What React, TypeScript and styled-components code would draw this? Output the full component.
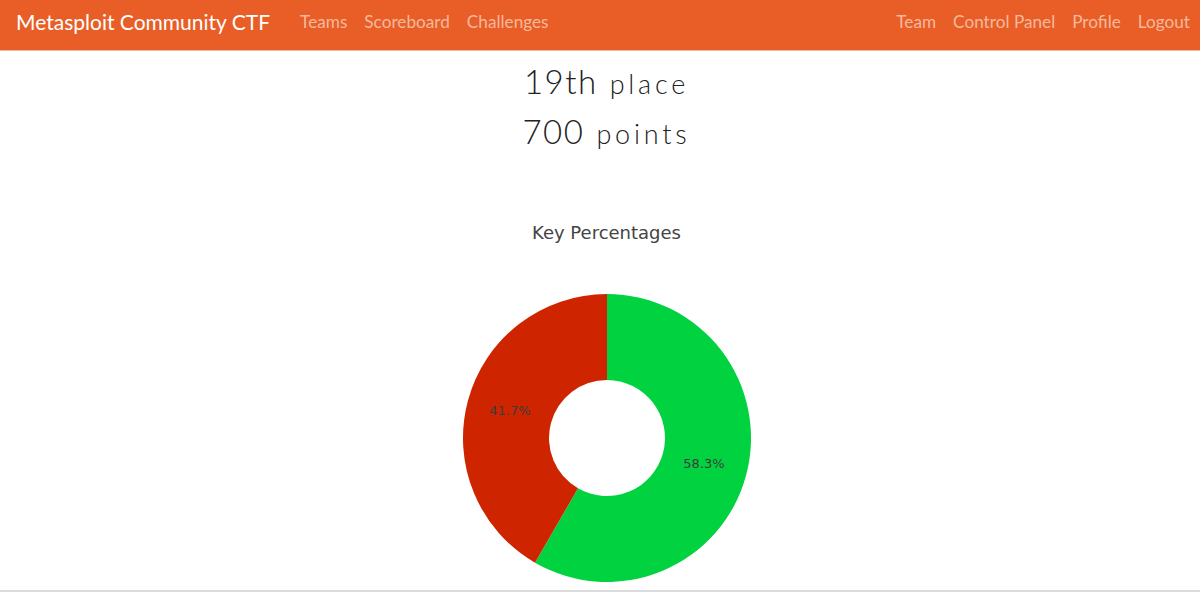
import React from "react";
import styled, { createGlobalStyle } from "styled-components";

const GlobalStyle = createGlobalStyle`
  html, body { margin: 0; padding: 0; background: #fff; }
  body { font-family: Lato, "Liberation Sans", sans-serif; }
  * { box-sizing: border-box; }
`;

const Page = styled.div`
  width: 1200px;
  height: 592px;
  display: flex;
  flex-direction: column;
  overflow: hidden;
  border-bottom: 2px solid #dcdcdc;
`;

const Navbar = styled.nav`
  height: 51px;
  flex: none;
  background: #e85e26;
  border-bottom: 1px solid #f1b79b;
  display: flex;
  align-items: center;
  justify-content: space-between;
  padding: 0 10px 8px 16px;
  font-family: Lato, "Liberation Sans", sans-serif;
`;

const NavGroup = styled.div<{ $gap: number }>`
  display: flex;
  align-items: center;
  gap: ${(p) => p.$gap}px;
`;

const Brand = styled.a`
  color: #fff;
  font-size: 21px;
  margin-right: 13px;
  text-decoration: none;
`;

const NavLink = styled.a`
  color: #f6b99d;
  font-size: 17.2px;
  text-decoration: none;
`;

const Main = styled.main`
  flex: 1;
  display: flex;
  flex-direction: column;
  align-items: center;
  padding: 5px 0 0 13px;
`;

const StatLine = styled.div`
  height: 50px;
  display: flex;
  align-items: baseline;
  justify-content: center;
  gap: 12px;
  color: #222;
  font-family: Lato, "Liberation Sans", sans-serif;
  font-weight: 300;
  letter-spacing: 1.5px;
  line-height: 50px;
`;

const StatValue = styled.span`
  font-size: 33px;
`;

const StatLabel = styled.span`
  font-size: 27px;
  letter-spacing: 3.8px;
`;

const ChartTitle = styled.h3`
  margin: 65px 0 0;
  font-family: "DejaVu Sans", Verdana, sans-serif;
  font-weight: 400;
  font-size: 18px;
  color: #444;
  line-height: 24px;
`;

const ChartSvg = styled.svg`
  margin-top: 48px;
  display: block;
`;

const SliceLabel = styled.text`
  font-family: "DejaVu Sans", Verdana, sans-serif;
  font-size: 13px;
  fill: #3c3c3c;
`;

const cx = 145;
const cy = 145;
const R = 144;
const r = 58;

function pt(rad: number, deg: number) {
  const a = (deg * Math.PI) / 180;
  return [cx + rad * Math.sin(a), cy - rad * Math.cos(a)];
}

function slice(start: number, end: number) {
  const [x1, y1] = pt(R, start);
  const [x2, y2] = pt(R, end);
  const [x3, y3] = pt(r, end);
  const [x4, y4] = pt(r, start);
  const large = Math.abs(end - start) > 180 ? 1 : 0;
  return `M${x1} ${y1} A${R} ${R} 0 ${large} 1 ${x2} ${y2} L${x3} ${y3} A${r} ${r} 0 ${large} 0 ${x4} ${y4} Z`;
}

export default function App() {
  return (
    <>
      <GlobalStyle />
      <Page>
        <Navbar>
          <NavGroup $gap={17}>
            <Brand>Metasploit Community CTF</Brand>
            <NavLink>Teams</NavLink>
            <NavLink>Scoreboard</NavLink>
            <NavLink>Challenges</NavLink>
          </NavGroup>
          <NavGroup $gap={17}>
            <NavLink>Team</NavLink>
            <NavLink>Control Panel</NavLink>
            <NavLink>Profile</NavLink>
            <NavLink>Logout</NavLink>
          </NavGroup>
        </Navbar>
        <Main>
          <StatLine>
            <StatValue>19th</StatValue>
            <StatLabel>place</StatLabel>
          </StatLine>
          <StatLine>
            <StatValue>700</StatValue>
            <StatLabel>points</StatLabel>
          </StatLine>
          <ChartTitle>Key Percentages</ChartTitle>
          <ChartSvg width={290} height={290} viewBox="0 0 290 290">
            <path d={slice(0, 210)} fill="#00d240" />
            <path d={slice(210, 360)} fill="#cf2400" />
            <SliceLabel x={48} y={122} textAnchor="middle">41.7%</SliceLabel>
            <SliceLabel x={242} y={175} textAnchor="middle">58.3%</SliceLabel>
          </ChartSvg>
        </Main>
      </Page>
    </>
  );
}
